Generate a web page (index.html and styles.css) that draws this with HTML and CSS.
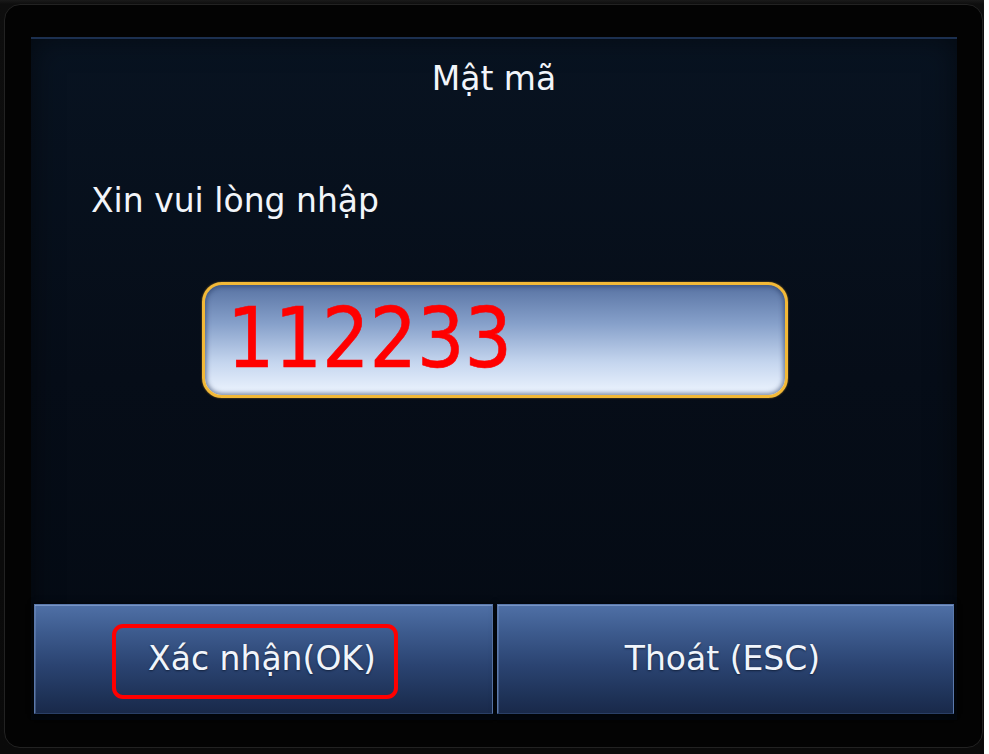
FILE: index.html
```html
<!DOCTYPE html>
<html lang="vi">
<head>
<meta charset="utf-8">
<title>Mật mã</title>
<link rel="stylesheet" href="styles.css">
</head>
<body>
<div class="device">
  <div class="bezel">
    <div class="screen">
      <div class="title">Mật mã</div>
      <div class="prompt">Xin vui lòng nhập</div>
      <div class="field"><span class="digits">112233</span></div>
      <div class="actions">
        <div class="btn btn-ok">
          <span class="label">Xác nhận(OK)</span>
          <span class="mark"></span>
        </div>
        <div class="btn btn-esc"><span class="label">Thoát (ESC)</span></div>
      </div>
    </div>
  </div>
</div>
</body>
</html>
```

FILE: styles.css
```css
html, body {
  margin: 0;
  padding: 0;
  background: #ffffff;
}

body {
  width: 989px;
  height: 754px;
  overflow: hidden;
  font-family: "DejaVu Sans", "Liberation Sans", sans-serif;
}

/* outer housing of the terminal */
.device {
  width: 984px;
  height: 754px;
  box-sizing: border-box;
  padding: 4px 1px 6px 4px;
  background: linear-gradient(to bottom, #1a1a1a 0px, #0e0e0e 4px, #0a0a0a 100%);
}

/* rounded bezel around the display */
.bezel {
  height: 100%;
  box-sizing: border-box;
  border: 1px solid #222222;
  border-radius: 16px;
  background: #030303;
  padding: 32px 25px 27px 26px;
}

/* the LCD itself */
.screen {
  height: 100%;
  box-sizing: border-box;
  display: flex;
  flex-direction: column;
  background: linear-gradient(to bottom, #081321 0%, #060d18 50%, #040a13 100%);
  box-shadow: inset 0 2px 0 #1c3050, inset 0 0 30px rgba(0, 0, 0, 0.5);
  color: #f2f5fa;
}

.title {
  padding-top: 22px;
  font-size: 33px;
  line-height: 40px;
  text-align: center;
}

.prompt {
  margin-top: 82px;
  padding-left: 60px;
  font-size: 33px;
  line-height: 40px;
}

/* password entry box */
.field {
  margin-top: 61px;
  margin-left: 171px;
  width: 586px;
  height: 116px;
  box-sizing: border-box;
  border: 3px solid #f3b937;
  border-radius: 20px;
  background: linear-gradient(to bottom, #5873a3 0%, #86a0ca 35%, #c4d5ee 70%, #eef5ff 100%);
  box-shadow: inset 0 0 4px 2px rgba(40, 60, 100, 0.55), 0 0 2px rgba(240, 180, 60, 0.6);
  display: flex;
  align-items: center;
  padding: 0 0 4px 22px;
}

.digits {
  font-family: "DejaVu Sans Condensed", "DejaVu Sans", sans-serif;
  font-stretch: condensed;
  font-size: 83px;
  line-height: 83px;
  color: #ff0000;
  -webkit-text-stroke: 0.6px #ff0000;
}

/* soft key row */
.actions {
  margin-top: auto;
  display: flex;
  gap: 4px;
  padding: 0 3px 6px 3px;
}

.btn {
  position: relative;
  height: 110px;
  box-sizing: border-box;
  display: flex;
  align-items: center;
  justify-content: center;
  border: 1px solid #5b79ac;
  border-bottom-color: #2a3f66;
  background: linear-gradient(to bottom, #4f70a6 0%, #3d5b8e 25%, #2b4472 55%, #1e3257 85%, #19294a 100%);
  box-shadow: inset 0 1px 0 rgba(170, 195, 235, 0.45), inset 1px 0 0 rgba(140, 170, 220, 0.3), 0 0 6px rgba(0, 0, 0, 0.8);
}

.btn-ok {
  width: 459px;
}

.btn-esc {
  flex: 1;
}

.label {
  font-size: 33px;
  line-height: 40px;
  color: #f1f5fb;
  text-shadow: 0 1px 2px rgba(10, 20, 40, 0.7);
}

.btn-ok .label {
  margin-left: -3px;
}

.btn-esc .label {
  margin-left: -6px;
}

/* red highlight drawn around the confirm label */
.mark {
  position: absolute;
  left: 77px;
  top: 19px;
  width: 286px;
  height: 75px;
  box-sizing: border-box;
  border: 4px solid #ff0000;
  border-radius: 11px;
}
```
